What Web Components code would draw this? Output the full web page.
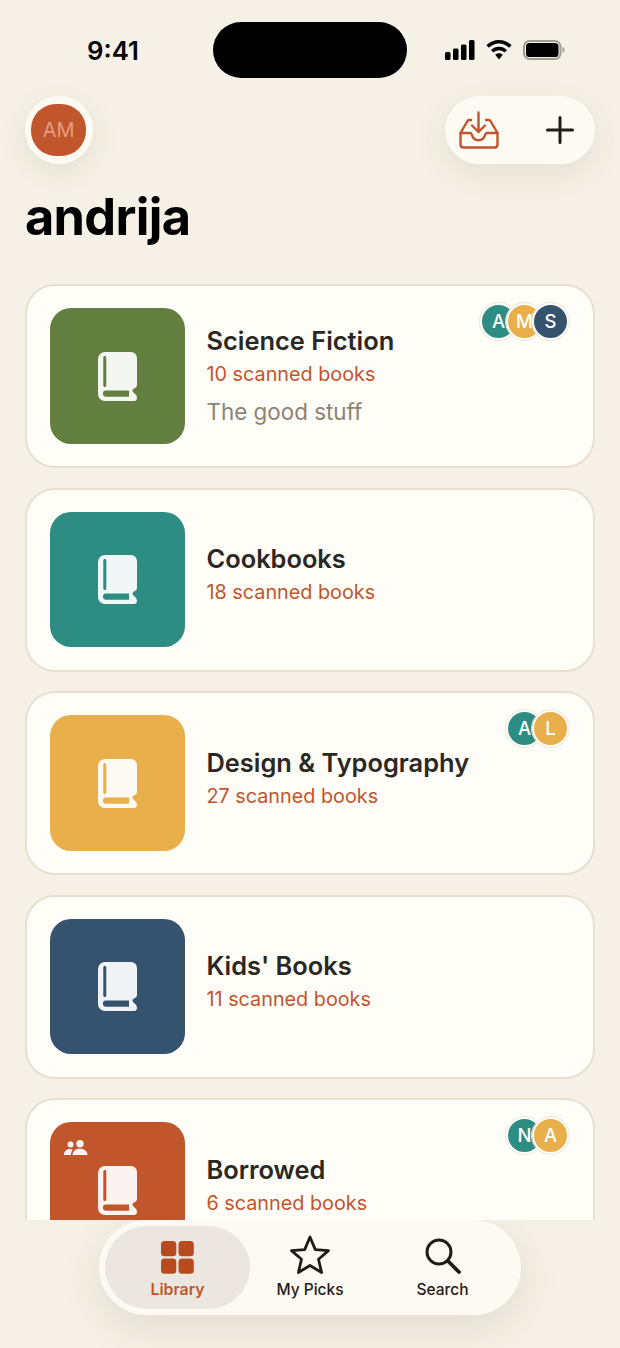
<!DOCTYPE html>
<html>
<head>
<meta charset="utf-8">
<title>Library</title>
<style>
    html, body {
        margin: 0;
        height: 1348px;
        overflow: hidden;
        background: #f5f1e6;
        font-family: Inter, "Liberation Sans", sans-serif;
    }
</style>
</head>
<body>
<library-app>
    <status-bar></status-bar>
    <library-header name="andrija" initials="AM"></library-header>
    <shelf-list>
        <shelf-card color="#637f40" count="10 scanned books" members="A:#2e8d83,M:#e8af4b,S:#35526f" note="The good stuff">Science Fiction</shelf-card>
        <shelf-card color="#2e8d83" count="18 scanned books">Cookbooks</shelf-card>
        <shelf-card color="#e8af4b" count="27 scanned books" members="A:#2e8d83,L:#e8af4b">Design &amp; Typography</shelf-card>
        <shelf-card color="#35526f" count="11 scanned books">Kids' Books</shelf-card>
        <shelf-card color="#c1552c" count="6 scanned books" members="N:#2e8d83,A:#e8af4b" shared>Borrowed</shelf-card>
    </shelf-list>
    <tab-bar></tab-bar>
</library-app>

<script>
// App frame: one column, the list takes what is left above the tab bar
class LibraryApp extends HTMLElement {
    constructor() {
        super();
        this.attachShadow({ mode: "open" });
        this.shadowRoot.innerHTML = `
            <style>
            :host {
                display: flex;
                flex-direction: column;
                height: 1348px;
                color: #000;
            }
            </style>
            <slot></slot>
        `;
    }
}
customElements.define("library-app", LibraryApp);

class StatusBar extends HTMLElement {
    constructor() {
        super();
        this.attachShadow({ mode: "open" });
        this.shadowRoot.innerHTML = `
            <style>
            :host {
                display: grid;
                grid-template-columns: 213px 194px 1fr;
                height: 56px;
                padding-top: 22px;
                padding-bottom: 18px;
                align-items: center;
            }
            .time {
                font-size: 25.700px;
                font-weight: 600;
                text-align: center;
                padding-left: 13px;
            }
            .island {
                height: 56px;
                background: #000;
                border-radius: 28px;
            }
            .icons {
                display: flex;
                align-items: center;
                gap: 11px;
                padding-left: 38px;
            }
            svg { display: block; }
            </style>
            <div class="time">9:41</div>
            <div class="island"></div>
            <div class="icons">
                <svg width="30" height="20" viewBox="0 0 30 20">
                    <rect x="0" y="12" width="5.500" height="8" rx="1.500"/>
                    <rect x="8" y="8.500" width="5.500" height="11.500" rx="1.500"/>
                    <rect x="16" y="4.500" width="5.500" height="15.500" rx="1.500"/>
                    <rect x="24" y="0" width="5.500" height="20" rx="1.500"/>
                </svg>
                <svg width="26" height="20" viewBox="0 0 26 20">
                    <path d="M13 0C8 0 3.600 2 .4 5.200l2.500 2.600C5.500 5.200 9.100 3.600 13 3.600s7.500 1.600 10.100 4.200l2.500-2.600C22.400 2 18 0 13 0z"/>
                    <path d="M13 6.700c-3.100 0-5.900 1.200-8 3.300l2.500 2.600c1.400-1.400 3.400-2.300 5.500-2.300s4.100.9 5.500 2.300l2.500-2.600c-2.100-2.100-4.900-3.300-8-3.300z"/>
                    <path d="M13 13.300c-1.500 0-2.800.6-3.800 1.500L13 19.500l3.800-4.700c-1-.9-2.300-1.500-3.800-1.500z"/>
                </svg>
                <svg width="43" height="20" viewBox="0 0 43 20">
                    <rect x="1" y="1" width="36.500" height="18" rx="5.500" fill="none" stroke="#a09c92" stroke-width="2"/>
                    <rect x="3" y="3" width="32.500" height="14" rx="3.600"/>
                    <path d="M39.500 7v6c1.200-.4 2-1.600 2-3s-.8-2.600-2-3z" fill="#a09c92"/>
                </svg>
            </div>
        `;
    }
}
customElements.define("status-bar", StatusBar);

class LibraryHeader extends HTMLElement {
    constructor() {
        super();
        this.attachShadow({ mode: "open" });
        this.shadowRoot.innerHTML = `
            <style>
            :host {
                display: block;
                padding: 0 25px;
            }
            .top {
                display: flex;
                justify-content: space-between;
            }
            .avatar {
                width: 67.500px;
                height: 67.500px;
                box-sizing: border-box;
                border-radius: 50%;
                background: #fdf9f3;
                display: flex;
                align-items: center;
                justify-content: center;
                box-shadow: 0 8px 28px rgba(90, 75, 50, 0.1);
            }
            .avatar span {
                width: 55px;
                height: 52.500px;
                border-radius: 25px;
                background: #c1552c;
                color: #e39d80;
                font-size: 20px;
                line-height: 53.500px;
                text-align: center;
            }
            .actions {
                width: 150px;
                height: 67.500px;
                border-radius: 34px;
                background: #fdf9f3;
                display: flex;
                align-items: center;
                gap: 47px;
                padding-left: 14px;
                box-sizing: border-box;
                box-shadow: 0 10px 32px rgba(90, 75, 50, 0.1);
            }
            svg { display: block; }
            h1 {
                margin: 22px 0 0;
                font-size: 50.500px;
                line-height: 62px;
                font-weight: 700;
                letter-spacing: -0.7px;
            }
            </style>
            <div class="top">
                <div class="avatar"><span></span></div>
                <div class="actions">
                    <svg width="40" height="38" viewBox="0 0 40 38" fill="none" stroke="#c1552c" stroke-width="2.400" stroke-linecap="round" stroke-linejoin="round">
                        <path d="M19.500 1.500V21M13 14.500l6.500 6.500 6.500-6.500"/>
                        <path d="M12 9H10.500c-.8 0-1.500.4-2 1L1.500 22v11.500c0 1.700 1.300 3 3 3h31c1.700 0 3-1.300 3-3V22l-7-12c-.5-.6-1.200-1-2-1H27"/>
                        <path d="M1.500 22h9.500c.8 0 1.400.5 1.700 1.300.9 3.500 3.500 6 6.800 6s5.900-2.500 6.800-6c.3-.8.9-1.300 1.700-1.300h10.500"/>
                    </svg>
                    <svg width="28" height="28" viewBox="0 0 28 28" fill="none" stroke="#1f1b16" stroke-width="3" stroke-linecap="round">
                        <path d="M14 1.500v25M1.500 14h25"/>
                    </svg>
                </div>
            </div>
            <h1></h1>
        `;
    }

    connectedCallback() {
        this.shadowRoot.querySelector("h1").innerText = this.getAttribute("name");
        this.shadowRoot.querySelector(".avatar span").innerText = this.getAttribute("initials");
    }
}
customElements.define("library-header", LibraryHeader);

class ShelfList extends HTMLElement {
    constructor() {
        super();
        this.attachShadow({ mode: "open" });
        this.shadowRoot.innerHTML = `
            <style>
            :host {
                display: flex;
                flex-direction: column;
                gap: 19.500px;
                flex: 1;
                min-height: 0;
                overflow: hidden;
                padding: 36.500px 25px 0;
            }
            </style>
            <slot></slot>
        `;
    }
}
customElements.define("shelf-list", ShelfList);

const cardTemplate = document.createElement("template");

cardTemplate.innerHTML = `
    <style>
    :host {
        display: flex;
        flex: none;
        position: relative;
        align-items: center;
        box-sizing: border-box;
        height: 184px;
        padding: 0 22.500px;
        gap: 21.500px;
        background: #fefdf8;
        border: 2px solid #e8dfcf;
        border-radius: 30px;
    }
    .thumb {
        flex: none;
        position: relative;
        display: flex;
        align-items: center;
        justify-content: center;
        width: 135.500px;
        height: 135.500px;
        border-radius: 21px;
    }
    .shared {
        display: none;
        position: absolute;
        left: 14px;
        top: 18px;
    }
    :host([shared]) .shared { display: block; }
    .body { padding-bottom: 2px; }
    .title {
        font-size: 25.400px;
        line-height: 33px;
        font-weight: 600;
        color: #2b2723;
    }
    .count {
        font-size: 19.800px;
        line-height: 34px;
        margin-bottom: 6px;
        color: #c1552c;
    }
    .note {
        font-size: 22.400px;
        line-height: 30px;
        color: #8c8375;
    }
    .note:empty { display: none; }
    .members {
        position: absolute;
        top: 17px;
        right: 24px;
        display: flex;
    }
    .members span {
        width: 33px;
        height: 33px;
        margin-left: -11px;
        border-radius: 50%;
        border: 2.500px solid #fefdf8;
        outline: 1px solid #ece7dc;
        font-size: 18.500px;
        font-weight: 500;
        line-height: 33px;
        text-align: center;
        color: #fff;
    }
    </style>
    <div class="thumb">
        <svg class="shared" width="24" height="16" viewBox="0 0 24 16" fill="#fff" opacity="0.95">
            <circle cx="6.500" cy="4.500" r="3"/>
            <circle cx="16" cy="3.700" r="3.700"/>
            <path d="M0 15c0-3.500 2.500-6 6-6 1 0 2 .2 2.800.7C7.500 11 7 13 7 15z"/>
            <path d="M8.500 15c0-3.800 3-6.300 7.500-6.300s7.500 2.500 7.500 6.300z"/>
        </svg>
        <svg width="39" height="49" viewBox="0 0 39 49" fill="#fff" fill-opacity="0.93" fill-rule="evenodd">
            <path d="M7 0H33a6 6 0 0 1 6 6V33c0 1.500-.8 2.300-2 2.900-1.600.8-2.500 1.500-2.500 2.600 0 1.200.8 2 2.300 3.200 1.300 1 2.200 2.200 2.200 4.300 0 1.500-1 3-2.500 3H7a7 7 0 0 1-7-7V7a7 7 0 0 1 7-7z
                     M6.800 4c-.8 0-1.500.7-1.500 1.500V33.500c0 .8.700 1.500 1.500 1.500s1.500-.7 1.500-1.500V5.500c0-.8-.7-1.500-1.500-1.500z
                     M7.500 38.500a3.200 3.200 0 0 0 0 6.300H31V38.500z"/>
        </svg>
    </div>
    <div class="body">
        <div class="title"><slot></slot></div>
        <div class="count"></div>
        <div class="note"></div>
    </div>
    <div class="members"></div>
`;

class ShelfCard extends HTMLElement {
    constructor() {
        super();
        this.attachShadow({ mode: "open" });
        this.shadowRoot.appendChild(cardTemplate.content.cloneNode(true));
    }

    connectedCallback() {
        const root = this.shadowRoot;
        root.querySelector(".thumb").style.background = this.getAttribute("color");
        root.querySelector(".count").innerText = this.getAttribute("count");
        root.querySelector(".note").textContent = this.getAttribute("note") || "";

        const members = this.getAttribute("members");
        if (members) {
            // each member is written as "letter:colour"
            for (const member of members.split(",")) {
                const [letter, colour] = member.split(":");
                const dot = document.createElement("span");
                dot.textContent = letter;
                dot.style.background = colour;
                root.querySelector(".members").appendChild(dot);
            }
        }
    }
}
customElements.define("shelf-card", ShelfCard);

class TabBar extends HTMLElement {
    constructor() {
        super();
        this.attachShadow({ mode: "open" });
        this.shadowRoot.innerHTML = `
            <style>
            :host {
                display: grid;
                grid-template-columns: 145px 120px 145px;
                flex: none;
                box-sizing: border-box;
                width: 422px;
                height: 95px;
                margin: 0 auto 33px;
                padding: 6px;
                background: #fdf9f3;
                border-radius: 48px;
                box-shadow: 0 12px 40px rgba(90, 75, 50, 0.12);
            }
            .tab {
                display: flex;
                flex-direction: column;
                align-items: center;
                border-radius: 42px;
                font-size: 15.500px;
                font-weight: 500;
                line-height: 20px;
                color: #1f1b16;
            }
            .tab.active {
                background: #ebe7e0;
                color: #c1552c;
                font-weight: 600;
                font-size: 15.800px;
            }
            .icon {
                height: 48px;
                display: flex;
                align-items: flex-end;
                margin-bottom: 6px;
            }
            svg { display: block; }
            </style>
            <div class="tab active">
                <div class="icon">
                    <svg width="33" height="33" viewBox="0 0 33 33" fill="#b84b1e">
                        <rect x="0" y="0" width="15.300" height="15.300" rx="3.500"/>
                        <rect x="17.500" y="0" width="15.300" height="15.300" rx="3.500"/>
                        <rect x="0" y="17.500" width="15.300" height="15.300" rx="3.500"/>
                        <rect x="17.500" y="17.500" width="15.300" height="15.300" rx="3.500"/>
                    </svg>
                </div>
                Library
            </div>
            <div class="tab">
                <div class="icon">
                    <svg width="40" height="39" viewBox="0 0 40 39" fill="none" stroke="#1f1b16" stroke-width="2.800" stroke-linejoin="round">
                        <path d="M20 2l5.300 12.600 13.200 1-10 8.700 3.100 13.200L20 30.500 8.400 37.500l3.100-13.200-10-8.700 13.200-1z"/>
                    </svg>
                </div>
                My Picks
            </div>
            <div class="tab">
                <div class="icon">
                    <svg width="36" height="36" viewBox="0 0 36 36" fill="none" stroke="#1f1b16" stroke-width="3" stroke-linecap="round">
                        <circle cx="14" cy="14" r="12"/>
                        <path d="M23 23l11 11" stroke-width="3.800"/>
                    </svg>
                </div>
                Search
            </div>
        `;
    }
}
customElements.define("tab-bar", TabBar);
</script>
</body>
</html>
